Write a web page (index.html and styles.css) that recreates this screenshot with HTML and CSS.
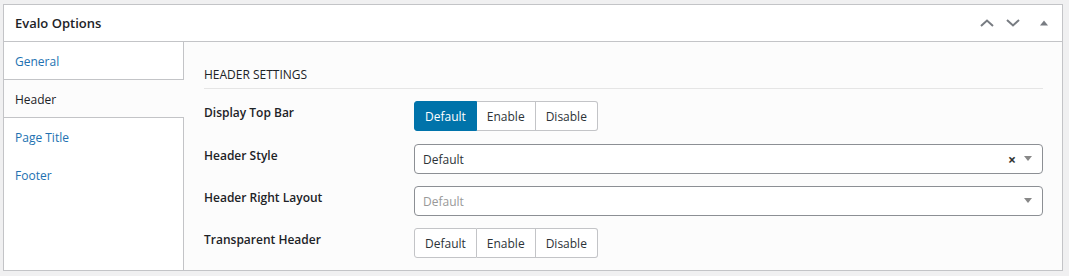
FILE: index.html
```html
<!DOCTYPE html>
<html lang="en">
<head>
  <meta charset="UTF-8" />
  <title>Evalo Options</title>
  <link rel="stylesheet" href="styles.css">
</head>
<body>
  <div class="postbox">
    <div class="postbox-header">
      <h2>Evalo Options</h2>
      <div class="handle-actions">
        <button class="handle up" aria-label="Move up">
          <svg width="14" height="10" viewBox="0 0 14 10"><path d="M1 8 L7 2.5 L13 8" fill="none" stroke="currentColor" stroke-width="2"/></svg>
        </button>
        <button class="handle down" aria-label="Move down">
          <svg width="14" height="10" viewBox="0 0 14 10"><path d="M1 2 L7 7.5 L13 2" fill="none" stroke="currentColor" stroke-width="2"/></svg>
        </button>
        <button class="handle toggle" aria-label="Toggle panel">
          <svg width="10" height="8" viewBox="0 0 10 8"><path d="M1 6.5 L5 1.5 L9 6.5 Z" fill="currentColor"/></svg>
        </button>
      </div>
    </div>

    <div class="options">
      <nav class="tabs">
        <a href="#" class="tab">General</a>
        <a href="#" class="tab active">Header</a>
        <a href="#" class="tab">Page Title</a>
        <a href="#" class="tab">Footer</a>
      </nav>

      <main class="panel">
        <h3>Header Settings</h3>
        <div class="fields">
          <label>Display Top Bar</label>
          <div class="btn-group first">
            <button class="on">Default</button>
            <button>Enable</button>
            <button>Disable</button>
          </div>

          <label>Header Style</label>
          <div class="select">
            <span class="value">Default</span>
            <span class="clear">&times;</span>
            <span class="arrow"></span>
          </div>

          <label>Header Right Layout</label>
          <div class="select">
            <span class="value placeholder">Default</span>
            <span class="arrow"></span>
          </div>

          <label>Transparent Header</label>
          <div class="btn-group">
            <button>Default</button>
            <button>Enable</button>
            <button>Disable</button>
          </div>
        </div>
      </main>
    </div>
  </div>
</body>
</html>
```

FILE: styles.css
```css
body {
  font-family: 'Segoe UI', 'Open Sans', sans-serif;
  font-size: 12px;
  background-color: #f0f0f1;
  color: #1d2327;
  margin: 0;
  padding: 4px 6px 0 3px;
}
.postbox {
  background: #fff;
  border: 1px solid #c3c4c7;
  box-sizing: border-box;
  height: 267px;
  display: flex;
  flex-direction: column;
}
.postbox-header {
  height: 36px;
  display: flex;
  align-items: center;
  justify-content: space-between;
  border-bottom: 1px solid #c3c4c7;
}
.postbox-header h2 {
  font-size: 13px;
  font-weight: 600;
  margin: 0 0 0 11px;
}
.handle-actions {
  display: flex;
  align-items: center;
}
.handle {
  background: none;
  border: 0;
  padding: 0;
  color: #787c82;
  width: 26px;
  height: 30px;
  display: flex;
  align-items: center;
  justify-content: center;
}
.handle.toggle {
  width: 36px;
}
.options {
  display: flex;
  flex-grow: 1;
}
.tabs {
  width: 179px;
  border-right: 1px solid #c3c4c7;
  display: flex;
  flex-direction: column;
}
.tab {
  color: #2271b1;
  text-decoration: none;
  line-height: 18px;
  padding: 11px 11px 8px;
  border-bottom: 1px solid transparent;
}
.tab:first-child {
  border-bottom-color: #c3c4c7;
}
.tab.active {
  color: #1d2327;
  background: #fcfcfc;
  border-bottom-color: #c3c4c7;
  margin-right: -1px;
  position: relative;
}
.panel {
  flex-grow: 1;
  background: #fcfcfc;
  padding: 20px 19px 0 20px;
}
.panel h3 {
  font-size: 12px;
  font-weight: 400;
  text-transform: uppercase;
  line-height: 18px;
  margin: 0;
  padding: 4px 0 4px;
  border-bottom: 1px solid #e5e5e5;
}
.fields {
  display: grid;
  grid-template-columns: 210px 1fr;
  row-gap: 12px;
  padding-top: 12px;
}
.fields label {
  font-weight: 600;
  line-height: 20px;
  padding-top: 2px;
}
.btn-group {
  display: flex;
  height: 30px;
}
.btn-group.first {
  margin-bottom: 1px;
}
.btn-group button {
  font: inherit;
  color: #2c3338;
  background: #fff;
  border: 1px solid #c3c4c7;
  border-left: 0;
  padding: 1px 10px 0;
}
.btn-group button:first-child {
  border-left: 1px solid #c3c4c7;
  border-radius: 3px 0 0 3px;
}
.btn-group button:last-child {
  border-radius: 0 3px 3px 0;
}
.btn-group button.on {
  background: #0073aa;
  border-color: #0073aa;
  color: #fff;
}
.select {
  height: 30px;
  box-sizing: border-box;
  border: 1px solid #8c8f94;
  border-radius: 4px;
  background: #fff;
  display: flex;
  align-items: center;
  padding: 1px 8px 0;
}
.select .value {
  flex-grow: 1;
  color: #2c3338;
}
.select .placeholder {
  color: #999;
}
.select .clear {
  font-size: 14px;
  font-weight: 700;
  color: #333;
  margin-right: 8px;
}
.select .arrow {
  width: 0;
  height: 0;
  border-left: 4px solid transparent;
  border-right: 4px solid transparent;
  border-top: 5px solid #888;
  margin: -2px 2px 0 0;
}
```
